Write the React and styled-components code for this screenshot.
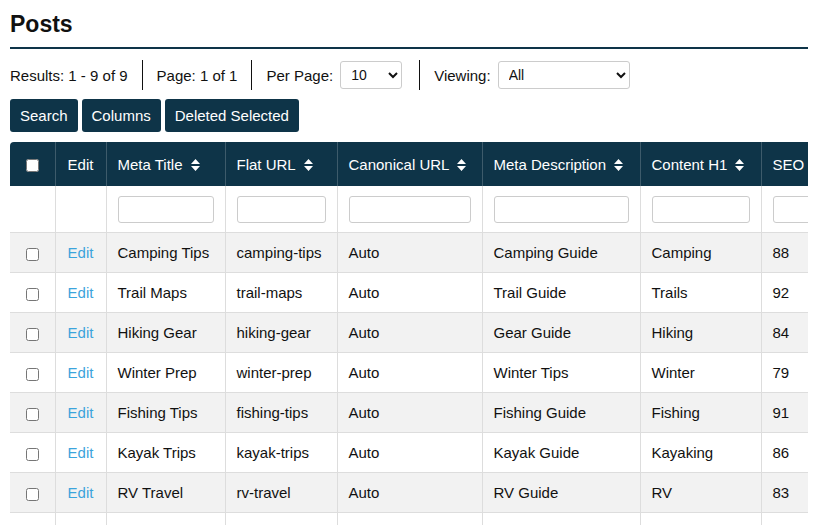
import React from "react";
import styled, { createGlobalStyle } from "styled-components";

const Global = createGlobalStyle`
  html, body { margin: 0; padding: 0; background: #fff; overflow: hidden; }
  body { font-family: "Liberation Sans", Arial, sans-serif; color: #111; }
`;
const Page = styled.div`padding: 0 10px;`;
const Title = styled.h1`
  margin: 0; padding-top: 10px; font-size: 23px; font-weight: 700; line-height: 28px;
  padding-bottom: 9px; border-bottom: 2px solid #0e3448;
`;
const Controls = styled.div`
  display: flex; align-items: center; height: 28px; margin-top: 12px; font-size: 15px;
`;
const Item = styled.div`
  display: flex; align-items: center; gap: 7px; padding: 0 ${p => p.$pr || 14}px 0 ${p => p.$pl || 14}px;
  border-left: ${p => (p.$first ? "none" : "1px solid #111")}; height: 30px;
  ${p => p.$first && "padding-left:0;"}
`;
const Select = styled.select`
  width: ${p => p.$w}px; height: 28px; border: 1px solid #ccc; border-radius: 3px;
  font: 14px "Liberation Sans", Arial, sans-serif; padding: 0 6px; background: #fff; color: #111;
`;
const Buttons = styled.div`display: flex; gap: 4px; margin-top: 10px;`;
const Button = styled.button`
  background: #0e3448; color: #fff; border: 0; border-radius: 3px; height: 33px;
  padding: 0 10px; font: 15px "Liberation Sans", Arial, sans-serif;
`;
const Wrap = styled.div`
  margin-top: 10px; width: 798px; height: 383px; overflow-x: scroll; overflow-y: hidden;
  &::-webkit-scrollbar { height: 15px; background: #f1f1f1; }
  &::-webkit-scrollbar-thumb { background: #8a8a8a; border-radius: 8px; border: 3px solid #f1f1f1; }
  &::-webkit-scrollbar-button:single-button { width: 15px; background: #f1f1f1; display: block; }
`;
const Table = styled.table`
  border-collapse: collapse; font-size: 15px; width: ${p => p.$w}px; table-layout: fixed;
`;
const Th = styled.th`
  background: #0e3448; color: #fff; font-weight: 400; height: 44px; text-align: ${p => p.$c ? "center" : "left"};
  padding: 0 11px; border-left: 1px solid #3d5b6b; white-space: nowrap; overflow: hidden;
  &:first-child { border-left: 0; border-top-left-radius: 4px; }
`;
const Td = styled.td`
  height: ${p => p.$h || 39}px; padding: 0 11px; border-left: 1px solid #ddd; border-bottom: 1px solid #ddd;
  text-align: ${p => p.$c ? "center" : "left"}; white-space: nowrap; overflow: hidden;
  &:first-child { border-left: 0; }
`;
const Tr = styled.tr`background: ${p => p.$alt ? "#f2f2f2" : "#fff"};`;
const Filter = styled.input`
  width: 100%; box-sizing: border-box; height: 27px; border: 1px solid #ccc; border-radius: 3px;
`;
const Check = styled.input`margin: 0; width: 13px; height: 13px; vertical-align: middle;`;
const EditLink = styled.a`color: #3ca4dc; text-decoration: none;`;
const Sort = () => (
  <svg width="9" height="12" viewBox="0 0 9 12" style={{ marginLeft: 8, verticalAlign: "-1px" }}>
    <path d="M4.5 0L9 5H0z M4.5 12L0 7h9z" fill="#fff" />
  </svg>
);

const cols = [
  ["", 45, false], ["Edit", 51, false], ["Meta Title", 119, true], ["Flat URL", 112, true],
  ["Canonical URL", 145, true], ["Meta Description", 158, true], ["Content H1", 121, true],
  ["SEO Score", 120, true], ["Status", 110, true], ["Author", 199, true],
];
const total = cols.reduce((s, c) => s + c[1], 0);
const rows = [
  ["Camping Tips", "camping-tips", "Camping Guide", "Camping", 88],
  ["Trail Maps", "trail-maps", "Trail Guide", "Trails", 92],
  ["Hiking Gear", "hiking-gear", "Gear Guide", "Hiking", 84],
  ["Winter Prep", "winter-prep", "Winter Tips", "Winter", 79],
  ["Fishing Tips", "fishing-tips", "Fishing Guide", "Fishing", 91],
  ["Kayak Trips", "kayak-trips", "Kayak Guide", "Kayaking", 86],
  ["RV Travel", "rv-travel", "RV Guide", "RV", 83],
  ["Bike Routes", "bike-routes", "Bike Guide", "Biking", 80],
  ["Lake Spots", "lake-spots", "Lake Guide", "Lakes", 87],
];

export default function App() {
  return (
    <Page>
      <Global />
      <Title>Posts</Title>
      <Controls>
        <Item $first>Results: 1 - 9 of 9</Item>
        <Item>Page: 1 of 1</Item>
        <Item $pr={17}>Per Page: <Select $w={62}><option>10</option></Select></Item>
        <Item>Viewing: <Select $w={132}><option>All</option></Select></Item>
      </Controls>
      <Buttons>
        <Button>Search</Button>
        <Button>Columns</Button>
        <Button>Deleted Selected</Button>
      </Buttons>
      <Wrap>
        <Table $w={total}>
          <colgroup>{cols.map((c, i) => <col key={i} style={{ width: c[1] }} />)}</colgroup>
          <thead>
            <tr>
              {cols.map((c, i) => (
                <Th key={i} $c={i < 2}>
                  {i === 0 ? <Check type="checkbox" /> : c[0]}
                  {c[2] && <Sort />}
                </Th>
              ))}
            </tr>
          </thead>
          <tbody>
            <Tr>
              {cols.map((c, i) => <Td key={i} $h={46}>{i > 1 && <Filter />}</Td>)}
            </Tr>
            {rows.map((r, i) => (
              <Tr key={i} $alt={i % 2 === 0}>
                <Td $c><Check type="checkbox" /></Td>
                <Td $c><EditLink href="#">Edit</EditLink></Td>
                <Td>{r[0]}</Td>
                <Td>{r[1]}</Td>
                <Td>Auto</Td>
                <Td>{r[2]}</Td>
                <Td>{r[3]}</Td>
                <Td>{r[4]}</Td>
                <Td>Published</Td>
                <Td>Admin</Td>
              </Tr>
            ))}
          </tbody>
        </Table>
      </Wrap>
    </Page>
  );
}
